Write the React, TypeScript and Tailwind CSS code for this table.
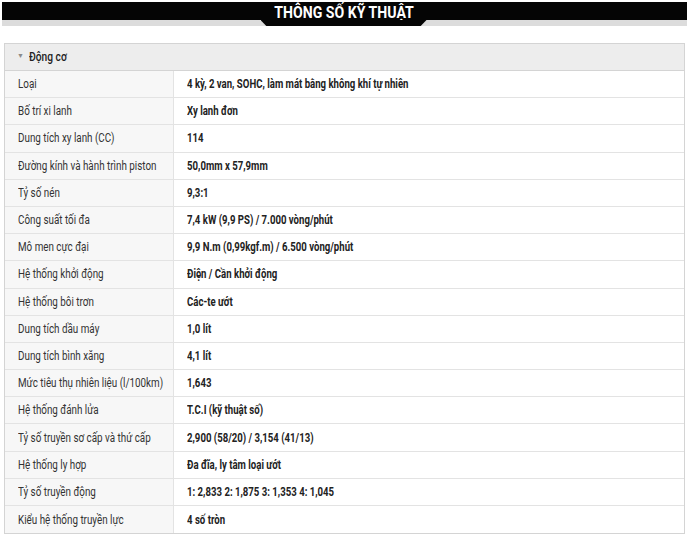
import React from "react";

const rows: [string, string][] = [
  ["Loại", "4 kỳ, 2 van, SOHC, làm mát bằng không khí tự nhiên"],
  ["Bố trí xi lanh", "Xy lanh đơn"],
  ["Dung tích xy lanh (CC)", "114"],
  ["Đường kính và hành trình piston", "50,0mm x 57,9mm"],
  ["Tỷ số nén", "9,3:1"],
  ["Công suất tối đa", "7,4 kW (9,9 PS) / 7.000 vòng/phút"],
  ["Mô men cực đại", "9,9 N.m (0,99kgf.m) / 6.500 vòng/phút"],
  ["Hệ thống khởi động", "Điện / Cần khởi động"],
  ["Hệ thống bôi trơn", "Các-te ướt"],
  ["Dung tích dầu máy", "1,0 lít"],
  ["Dung tích bình xăng", "4,1 lít"],
  ["Mức tiêu thụ nhiên liệu (l/100km)", "1,643"],
  ["Hệ thống đánh lửa", "T.C.I (kỹ thuật số)"],
  ["Tỷ số truyền sơ cấp và thứ cấp", "2,900 (58/20) / 3,154 (41/13)"],
  ["Hệ thống ly hợp", "Đa đĩa, ly tâm loại ướt"],
  ["Tỷ số truyền động", "1: 2,833 2: 1,875 3: 1,353 4: 1,045"],
  ["Kiểu hệ thống truyền lực", "4 số tròn"],
];

export default function App() {
  return (
    <div
      className="w-[689px] h-[535px] bg-white pt-[2px] overflow-hidden"
      style={{ fontFamily: "Roboto, 'Liberation Sans', sans-serif" }}
    >
      <div className="mx-[2px] flex flex-col">
        <div className="h-[18px] bg-[#050505] flex items-end justify-center">
          <span className="text-white font-bold text-[17px] leading-[17px] scale-x-[0.83] inline-block whitespace-nowrap translate-y-[1px]">
            THÔNG SỐ KỸ THUẬT
          </span>
        </div>
        <div className="h-[6px] bg-[#dcdcdc] flex justify-center">
          <div
            className="w-[166px] h-[6px] bg-[#050505] translate-x-[-1px]"
            style={{ clipPath: "polygon(0 0, 100% 0, 96.5% 100%, 3.5% 100%)" }}
          />
        </div>
      </div>
      <div className="mt-[17px] ml-[4px] w-[681px] border border-[#d4d4d4]">
        <div className="h-[27px] bg-[#ededed] border-b border-[#d4d4d4] flex items-center pl-[12px] text-[12px] text-[#222] font-medium">
          <span className="text-[#8a8a8a] text-[7px] mr-[5px] translate-y-[-1px]">▼</span>
          <span className="inline-block origin-left scale-x-[0.85] whitespace-nowrap">Động cơ</span>
        </div>
        {rows.map(([k, v], i) => (
          <div
            key={i}
            className={`flex h-[27.2px] ${i < rows.length - 1 ? "border-b border-[#e3e3e3]" : ""}`}
          >
            <div className="w-[169px] bg-[#f7f7f7] border-r border-[#e3e3e3] flex items-center pl-[13px] text-[12px] text-[#333] overflow-hidden">
              <span className="inline-block origin-left scale-x-[0.82] whitespace-nowrap">{k}</span>
            </div>
            <div className="flex-1 bg-white flex items-center pl-[13px] text-[12px] font-bold text-[#222]">
              <span className="inline-block origin-left scale-x-[0.8] whitespace-nowrap">{v}</span>
            </div>
          </div>
        ))}
      </div>
    </div>
  );
}
